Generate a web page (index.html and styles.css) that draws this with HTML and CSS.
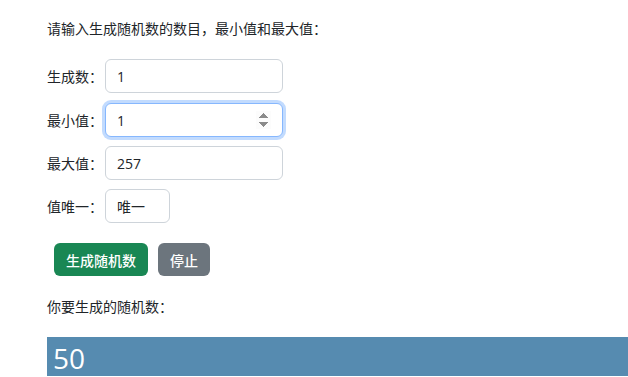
FILE: index.html
```html
<!DOCTYPE html>
<html lang="zh-CN">
<head>
  <meta charset="UTF-8" />
  <meta name="viewport" content="width=device-width, initial-scale=1.0"/>
  <title>随机数生成器</title>
  <link rel="stylesheet" href="styles.css">
</head>
<body>
  <div class="container">
    <p class="intro">请输入生成随机数的数目，最小值和最大值：</p>

    <form id="randForm">
      <div class="row">
        <label for="count">生成数：</label>
        <input type="text" id="count" class="field" value="1" />
      </div>
      <div class="row">
        <label for="min">最小值：</label>
        <input type="number" id="min" class="field active" value="1" autofocus />
      </div>
      <div class="row">
        <label for="max">最大值：</label>
        <input type="text" id="max" class="field" value="257" />
      </div>
      <div class="row">
        <label for="unique">值唯一：</label>
        <input type="text" id="unique" class="field small" value="唯一" />
      </div>

      <div class="actions">
        <button type="submit" class="btn green">生成随机数</button>
        <button type="button" class="btn gray">停止</button>
      </div>
    </form>

    <p class="result-label">你要生成的随机数：</p>
    <div class="result">50</div>
  </div>
</body>
</html>
```

FILE: styles.css
```css
body {
  margin: 0;
  font-family: "Noto Sans CJK SC", "Open Sans", sans-serif;
  font-size: 14px;
  color: #212529;
  background: #fff;
}

.container {
  padding: 18px 0 0 47px;
}

.intro {
  margin: 0 0 21px;
  line-height: 20px;
}

.row {
  display: flex;
  align-items: center;
  margin-bottom: 10px;
}

.row:nth-child(n+3) {
  margin-top: -1px;
}

.row label {
  width: 58px;
}

.field {
  box-sizing: border-box;
  width: 178px;
  height: 34px;
  padding: 0 11px;
  border: 1px solid #ced4da;
  border-radius: 6px;
  font-family: "Open Sans", "Noto Sans CJK SC", sans-serif;
  font-size: 14px;
  color: #212529;
  outline: none;
}

.field.small {
  width: 65px;
  font-family: "Noto Sans CJK SC", sans-serif;
}

.field.active,
.field:focus {
  border-color: #86b7fe;
  box-shadow: 0 0 0 3px rgba(13, 110, 253, 0.25);
}

.actions {
  display: flex;
  gap: 10px;
  margin: 20px 0 0 7px;
}

.btn {
  height: 33px;
  padding: 0 12px;
  border: none;
  border-radius: 6px;
  color: #fff;
  font-family: "Noto Sans CJK SC", sans-serif;
  font-size: 14px;
  font-weight: 500;
  cursor: pointer;
}

.green {
  background: #198754;
}

.gray {
  background: #6c757d;
}

.result-label {
  margin: 20px 0 0;
  line-height: 20px;
}

.result {
  margin-top: 21px;
  height: 39px;
  padding-left: 6px;
  background: #568bb0;
  color: #fff;
  font-family: "Open Sans", sans-serif;
  font-size: 28px;
  line-height: 42px;
  overflow: hidden;
}
```
